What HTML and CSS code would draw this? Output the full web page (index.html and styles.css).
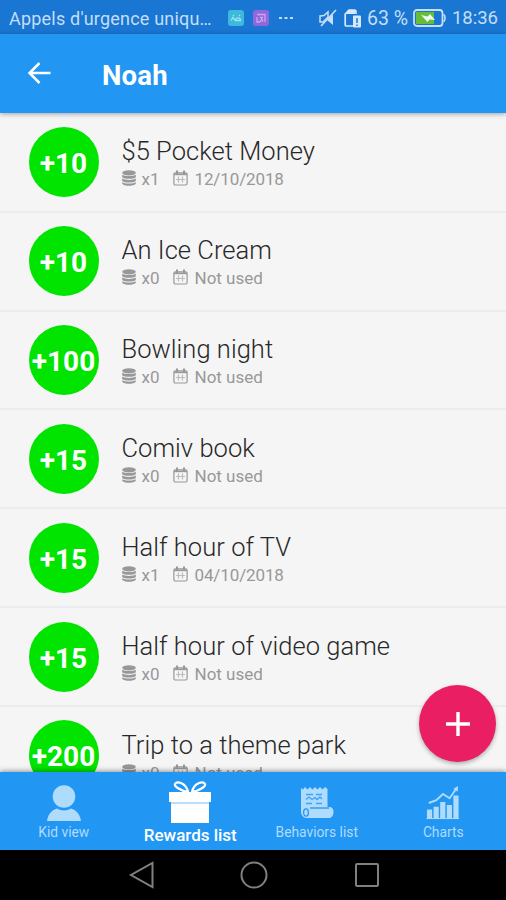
FILE: index.html
```
<!DOCTYPE html>
<html lang="en">
<head>
<meta charset="utf-8">
<title>Noah</title>
<link rel="stylesheet" href="styles.css">
</head>
<body>
<svg class="defs" aria-hidden="true">
  <symbol id="coins" viewBox="0 0 14 16">
    <ellipse cx="7" cy="2.800" rx="6.800" ry="2.600"/>
    <path d="M.2 4.600C2.500 6.600 11.500 6.600 13.800 4.600V7.200C11.500 9.400 2.500 9.400.2 7.200Z"/>
    <path d="M.2 8.600C2.500 10.500 11.500 10.500 13.800 8.600V10.900C11.500 13 2.500 13 .2 10.900Z"/>
    <path d="M.2 12.200C2.500 14 11.500 14 13.800 12.200V13.700C11.500 16.400 2.500 16.400.2 13.700Z"/>
  </symbol>
  <symbol id="calendar" viewBox="0 0 15 16">
    <g fill="none" stroke="currentColor">
      <rect x=".9" y="2.800" width="13.200" height="12.200" rx="1.500" stroke-width="1.200"/>
      <path d="M1 4.400H14" stroke-width="1.600"/>
      <path d="M4 .5V4M11 .5V4" stroke-width="2"/>
      <path d="M3 9.500H12M5.500 6.500V12.500M9.500 6.500V12.500" stroke-width="1.200" opacity=".6"/>
    </g>
  </symbol>
</svg>
<div class="phone">
  <header class="status">
    <span class="carrier">Appels d'urgence uniqu…</span>
    <svg class="app" viewBox="0 0 16 16"><rect width="16" height="16" rx="3" fill="#3db9dc"/><path d="M3 10.500L5 7.500L7 10.500M7.500 10.500C7.500 7 12.500 7 12.500 10.500ZM5 5L6 6M12 5L11 6" fill="none" stroke="#9be3ee" stroke-width="1.300"/></svg>
    <svg class="app app-second" viewBox="0 0 16 16"><rect width="16" height="16" rx="3" fill="#9068dc"/><path d="M4 4.500H12V12M4 7V12H7M7 7.500H10M9.500 7.500L7 12M9.500 9.500V12" fill="none" stroke="#c8a6ef" stroke-width="1.300"/></svg>
    <svg class="dots" viewBox="0 0 14 4"><path d="M0 1h3v2H0ZM5.500 1h3v2h-3ZM11 1h3v2h-3Z" fill="#c3dcf5"/></svg>
    <svg class="mute" viewBox="0 0 18 18"><path d="M1 7L5 6.500L9 3V8L4 13H1Z" fill="none" stroke="#c7dff7" stroke-width="1.500"/><path d="M8 11L14 5V16Z" fill="#c7dff7"/><path d="M2 17L17 1" stroke="#c7dff7" stroke-width="1.700"/></svg>
    <svg class="sim" viewBox="0 0 18 19"><path d="M9 17H2.500Q1.200 17 1.200 15.500V5L5 1.200H10.500Q12 1.200 12 2.700V5" fill="none" stroke="#d6e8fb" stroke-width="1.700"/><path d="M1 5L5 1H11V5Z" fill="#d6e8fb"/><rect x="9" y="6.500" width="8" height="12" rx="1" fill="#d6e8fb"/><path d="M13 9v5M13 15.500v1.500" stroke="#1976d2" stroke-width="1.500"/></svg>
    <span class="percent">63 %</span>
    <svg class="battery" viewBox="0 0 33 18"><rect x="1" y="1" width="28.500" height="16" rx="3" fill="#1976d2" stroke="#c9dff5" stroke-width="1.800"/><path d="M3 3H21V15H3Z" fill="#65bd3a"/><path d="M30.500 5.500Q32 6 32 9T30.500 12.500" fill="none" stroke="#c9dff5" stroke-width="1.500"/><path d="M8 6L14.500 7.500L17 5L22 11L16.500 10.500L14.500 13Z" fill="#f0faee"/></svg>
    <span class="clock">18:36</span>
  </header>
  <div class="toolbar">
    <svg class="back" viewBox="0 0 24 22"><path d="M23.500 11H2.500M12.500 1L2.500 11L12.500 21" fill="none" stroke="#fff" stroke-width="2.500"/></svg>
    <h1>Noah</h1>
  </div>
  <main class="list">
    <article class="row"><div class="points">+10</div><div><h2>$5 Pocket Money</h2><p><svg class="coins"><use href="#coins"/></svg><span class="count">x1</span><svg class="cal"><use href="#calendar"/></svg><span class="date">12/10/2018</span></p></div></article>
    <article class="row"><div class="points">+10</div><div><h2>An Ice Cream</h2><p><svg class="coins"><use href="#coins"/></svg><span class="count">x0</span><svg class="cal"><use href="#calendar"/></svg><span>Not used</span></p></div></article>
    <article class="row"><div class="points">+100</div><div><h2>Bowling night</h2><p><svg class="coins"><use href="#coins"/></svg><span class="count">x0</span><svg class="cal"><use href="#calendar"/></svg><span>Not used</span></p></div></article>
    <article class="row"><div class="points">+15</div><div><h2>Comiv book</h2><p><svg class="coins"><use href="#coins"/></svg><span class="count">x0</span><svg class="cal"><use href="#calendar"/></svg><span>Not used</span></p></div></article>
    <article class="row"><div class="points">+15</div><div><h2>Half hour of TV</h2><p><svg class="coins"><use href="#coins"/></svg><span class="count">x1</span><svg class="cal"><use href="#calendar"/></svg><span class="date">04/10/2018</span></p></div></article>
    <article class="row"><div class="points">+15</div><div><h2>Half hour of video game</h2><p><svg class="coins"><use href="#coins"/></svg><span class="count">x0</span><svg class="cal"><use href="#calendar"/></svg><span>Not used</span></p></div></article>
    <article class="row"><div class="points">+200</div><div><h2>Trip to a theme park</h2><p><svg class="coins"><use href="#coins"/></svg><span class="count">x0</span><svg class="cal"><use href="#calendar"/></svg><span>Not used</span></p></div></article>
  </main>
  <button class="fab" aria-label="Add"><svg viewBox="0 0 24 24"><path d="M12 0V24M0 12H24" stroke="#fff" stroke-width="3.400"/></svg></button>
  <nav class="tabs">
    <a class="tab"><svg class="tab-icon" viewBox="0 0 34 36"><circle cx="17" cy="11.500" r="11.300"/><path d="M0 36C1 29 5 25 10 23.500C14 26 20 26 24 23.500C29 25 33 29 34 36Z"/></svg><span>Kid view</span></a>
    <a class="tab active"><svg class="tab-icon" viewBox="0 0 42 42"><path d="M0 11H42V21H0ZM2 22.500H40V42H2Z"/><path d="M2 21H40V22.500H2Z" opacity=".7"/><path d="M19 11C12 10 5 5.500 6 3C8-.5 17 2 19 11ZM23 11C30 10 37 5.500 36 3C34-.5 25 2 23 11Z" fill="none" stroke="currentColor" stroke-width="2.300"/></svg><span>Rewards list</span></a>
    <a class="tab"><svg class="tab-icon" viewBox="0 0 34 36"><path d="M1 3L3 4.500L5 2L7.500 4.500L10 2L12.500 4.500L15 2L17.500 4.500L20 2L22.500 4.500L25 2L27.500 4V22H30Q33.500 22.500 33.500 27T30 33H6Q1 32 1 26Z"/><g fill="none" stroke="#2196f3" stroke-width="1.300"><path d="M6 9.500H13M16 9.500H22M6 14.500L9 12L12 14.500L15 12.500L17 14.500L20 12L22 14M6 18.500H12M16 18.500H22" opacity=".8"/><path d="M10 23H29"/><ellipse cx="6" cy="27.500" rx="2.400" ry="3.700"/></g></svg><span>Behaviors list</span></a>
    <a class="tab"><svg class="tab-icon" viewBox="0 0 36 36"><path d="M1 25H6.500V35H1ZM8 22H13.500V35H8ZM15 17H20.500V35H15ZM22 20H27.500V35H22ZM29 10H34.500V35H29Z"/><path d="M.5 34.500H35" stroke="currentColor"/><path d="M3 18L11 15L18 8.500L25 13L32 3" fill="none" stroke="currentColor" stroke-width="2"/><path d="M29 3L34 0L33.500 6Z"/></svg><span>Charts</span></a>
  </nav>
  <footer class="system">
    <svg viewBox="0 0 28 28"><path d="M25.500 2V26L4 14Z"/></svg>
    <svg viewBox="0 0 28 28"><circle cx="14" cy="14" r="12.500"/></svg>
    <svg viewBox="0 0 28 28"><rect x="3" y="3" width="22" height="22" rx="1"/></svg>
  </footer>
</div>
</body>
</html>
```
FILE: styles.css
```
* { box-sizing: border-box; }
body { margin: 0; font-family: Roboto, "Liberation Sans", sans-serif; }
h1, h2, p { margin: 0; }
.defs { display: none; }
svg { display: block; flex: none; }
.phone { position: relative; width: 506px; height: 900px; display: flex; flex-direction: column; overflow: hidden; background: #f5f5f5; }

.status { height: 34px; padding: 2px 8px 0 9px; flex: none; display: flex; align-items: center; background: #1976d2; color: #c5def7; font-size: 18px; white-space: nowrap; }
.carrier { width: 219px; letter-spacing: .2px; }
.app { width: 16px; height: 16px; }
.app-second { margin-left: 9px; }
.dots { width: 14px; height: 4px; margin-left: 10px; }
.mute { width: 18px; height: 18px; margin-left: 26px; }
.sim { width: 18px; height: 19px; margin-left: 7px; }
.percent { width: 46px; margin-left: 5px; font-size: 19.500px; }
.battery { width: 33px; height: 18px; }
.clock { margin-left: 6px; font-size: 18.500px; }

.toolbar { position: relative; z-index: 1; height: 79px; padding: 0 27px; flex: none; display: flex; align-items: center; background: #2196f3; box-shadow: 0 1px 5px rgba(0, 0, 0, .35); }
.back { width: 24px; height: 22px; margin-bottom: 1px; }
.toolbar h1 { margin: 4px 0 0 51px; color: #fff; font-size: 27.500px; line-height: 32px; font-weight: 700; letter-spacing: .2px; }

.list { flex: 1; min-height: 0; padding-top: .8px; overflow: hidden; }
.row { height: 98.900px; padding: 13.300px 28.500px 0; display: flex; align-items: flex-start; gap: 23px; border-bottom: 2px solid #ececec; }
.points { width: 70px; height: 70px; flex: none; display: flex; align-items: center; justify-content: center; border-radius: 50%; padding-top: 3px; background: #00e400; color: #fff; font-size: 28px; font-weight: 700; }
.row h2 { margin-top: 8.200px; color: #282828; font-size: 25.500px; line-height: 32px; font-weight: 300; letter-spacing: .04px; white-space: nowrap; }
.row p { height: 22px; margin-top: 1px; display: flex; align-items: center; color: #989898; font-size: 17px; line-height: 22px; white-space: nowrap; }
.coins { width: 14px; height: 16px; margin: -2px 6px 0 0; fill: #989898; }
.count { width: 31px; }
.cal { width: 15px; height: 16px; margin: -2px 7px 0 0; }
.date { letter-spacing: -.12px; }

.fab { position: absolute; left: 419px; top: 685px; z-index: 2; width: 77px; height: 77px; padding: 0; border: 0; border-radius: 50%; display: grid; place-items: center; background: #e91e63; box-shadow: 0 2px 4px rgba(0, 0, 0, .3); }
.fab svg { width: 24px; height: 24px; }

.tabs { position: relative; z-index: 1; height: 78px; flex: none; display: grid; grid-template-columns: repeat(4, 1fr); background: #2196f3; box-shadow: 0 -1px 5px rgba(0, 0, 0, .4); }
.tab { display: flex; flex-direction: column; align-items: center; color: #afdbfd; font-size: 13.800px; line-height: 18px; padding: 13px 0 0 1px; white-space: nowrap; }
.tab-icon { width: 34px; height: 36px; margin-bottom: 2px; fill: currentColor; }
.tab.active { color: #fff; font-size: 17px; line-height: 22px; font-weight: 500; padding-top: 9px; }
.active .tab-icon { width: 42px; height: 42px; margin-bottom: 1px; }

.system { height: 50px; padding-left: 1px; flex: none; display: flex; align-items: center; justify-content: center; gap: 85px; background: #000; }
.system svg { width: 28px; height: 28px; fill: none; stroke: #808080; stroke-width: 2; }
```
